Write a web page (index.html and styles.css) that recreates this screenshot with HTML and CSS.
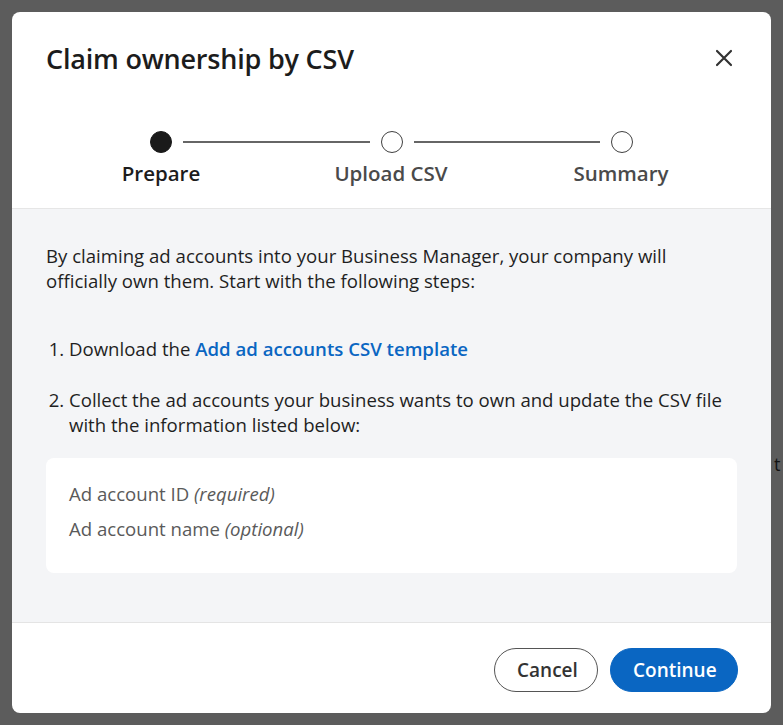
FILE: index.html
```html
<!DOCTYPE html>
<html lang="en">
<head>
<meta charset="utf-8">
<title>Claim ownership by CSV</title>
<link rel="stylesheet" href="styles.css">
</head>
<body>
<span class="backdrop-text">t</span>
<div class="modal">
  <header class="modal-header">
    <div class="title-row">
      <h1 class="title">Claim ownership by CSV</h1>
      <button class="close" aria-label="Close">
        <svg width="18" height="18" viewBox="0 0 18 18"><path d="M2 2L16 16M16 2L2 16" stroke="#333" stroke-width="2.2" stroke-linecap="round"/></svg>
      </button>
    </div>
    <div class="stepper">
      <div class="track">
        <span class="dot active"></span>
        <span class="line"></span>
        <span class="dot"></span>
        <span class="line"></span>
        <span class="dot"></span>
      </div>
      <div class="labels">
        <span class="label active">Prepare</span>
        <span class="label">Upload CSV</span>
        <span class="label">Summary</span>
      </div>
    </div>
  </header>
  <section class="modal-body">
    <p class="intro">By claiming ad accounts into your Business Manager, your company will officially own them. Start with the following steps:</p>
    <ol class="steps">
      <li>Download the <a href="#" class="link">Add ad accounts CSV template</a></li>
      <li>Collect the ad accounts your business wants to own and update the CSV file with the information listed below:</li>
    </ol>
    <div class="fields">
      <div class="field">Ad account ID <em>(required)</em></div>
      <div class="field">Ad account name <em>(optional)</em></div>
    </div>
  </section>
  <footer class="modal-footer">
    <button class="btn btn-secondary">Cancel</button>
    <button class="btn btn-primary">Continue</button>
  </footer>
</div>
</body>
</html>
```

FILE: styles.css
```css
* { box-sizing: border-box; }
html, body { margin: 0; height: 100%; }
body {
  background: #5c5c5c;
  padding: 12px;
  font-family: "Open Sans", "Noto Sans", sans-serif;
  color: #1f1f1f;
  position: relative;
}
.backdrop-text {
  position: absolute;
  left: 774px;
  top: 452px;
  font-size: 18px;
  color: #111;
}
.modal {
  width: 759px;
  height: 701px;
  background: #fff;
  border-radius: 8px;
  display: flex;
  flex-direction: column;
  overflow: hidden;
}
.modal-header {
  padding: 29px 34px 0 34px;
  height: 197px;
  flex: none;
  border-bottom: 1px solid #e6e6e6;
}
.title-row {
  display: flex;
  align-items: center;
  justify-content: space-between;
}
.title {
  margin: 0;
  font-size: 27px;
  font-weight: 600;
  line-height: 36px;
  color: #1c1c1c;
  letter-spacing: -0.2px;
}
.close {
  border: 0;
  background: none;
  padding: 0;
  width: 18px;
  height: 18px;
  margin-right: 4px;
  margin-top: -3px;
  display: flex;
}
.stepper {
  margin-top: 54px;
}
.track {
  display: flex;
  align-items: center;
  padding: 0 104px;
  height: 22px;
}
.dot {
  width: 22px;
  height: 22px;
  border-radius: 50%;
  border: 1.5px solid #404040;
  flex: none;
  background: #fff;
}
.dot.active {
  background: #1a1a1a;
  border-color: #1a1a1a;
}
.line {
  flex: 1;
  height: 2px;
  background: #666;
  margin: 0 11px;
}
.labels {
  display: grid;
  grid-template-columns: repeat(3, 230px);
  margin-top: 6px;
}
.label {
  text-align: center;
  font-size: 20.5px;
  font-weight: 600;
  line-height: 28px;
  color: #4a4a4a;
}
.label.active { color: #1c1c1c; }
.modal-body {
  flex: 1;
  background: #f4f5f7;
  padding: 34px 34px 0 34px;
  border-bottom: 1px solid #e4e4e4;
}
.intro {
  margin: 0;
  font-size: 18.6px;
  line-height: 25px;
  color: #1f1f1f;
}
.steps {
  margin: 43px 0 0 0;
  padding-left: 23px;
  font-size: 18.6px;
  line-height: 25px;
}
.steps li + li { margin-top: 26px; }
.link {
  color: #0a66c2;
  font-weight: 600;
  text-decoration: none;
}
.fields {
  margin-top: 21px;
  background: #fff;
  border-radius: 8px;
  height: 115px;
  padding: 23px 23px;
}
.field {
  font-size: 18.6px;
  line-height: 25px;
  color: #5a5a5a;
}
.field + .field { margin-top: 10px; }
.field em { font-style: italic; }
.modal-footer {
  height: 90px;
  flex: none;
  display: flex;
  justify-content: flex-end;
  align-items: center;
  gap: 12px;
  padding: 4px 33px 0 0;
}
.btn {
  height: 44px;
  border-radius: 22px;
  font-family: inherit;
  font-size: 19px;
  font-weight: 600;
  padding: 0 22px;
  cursor: pointer;
}
.btn-secondary {
  width: 104px;
  background: #fff;
  border: 1px solid #555;
  color: #333;
}
.btn-primary {
  width: 128px;
  background: #0a66c2;
  border: 1px solid #0a66c2;
  color: #fff;
}
```
